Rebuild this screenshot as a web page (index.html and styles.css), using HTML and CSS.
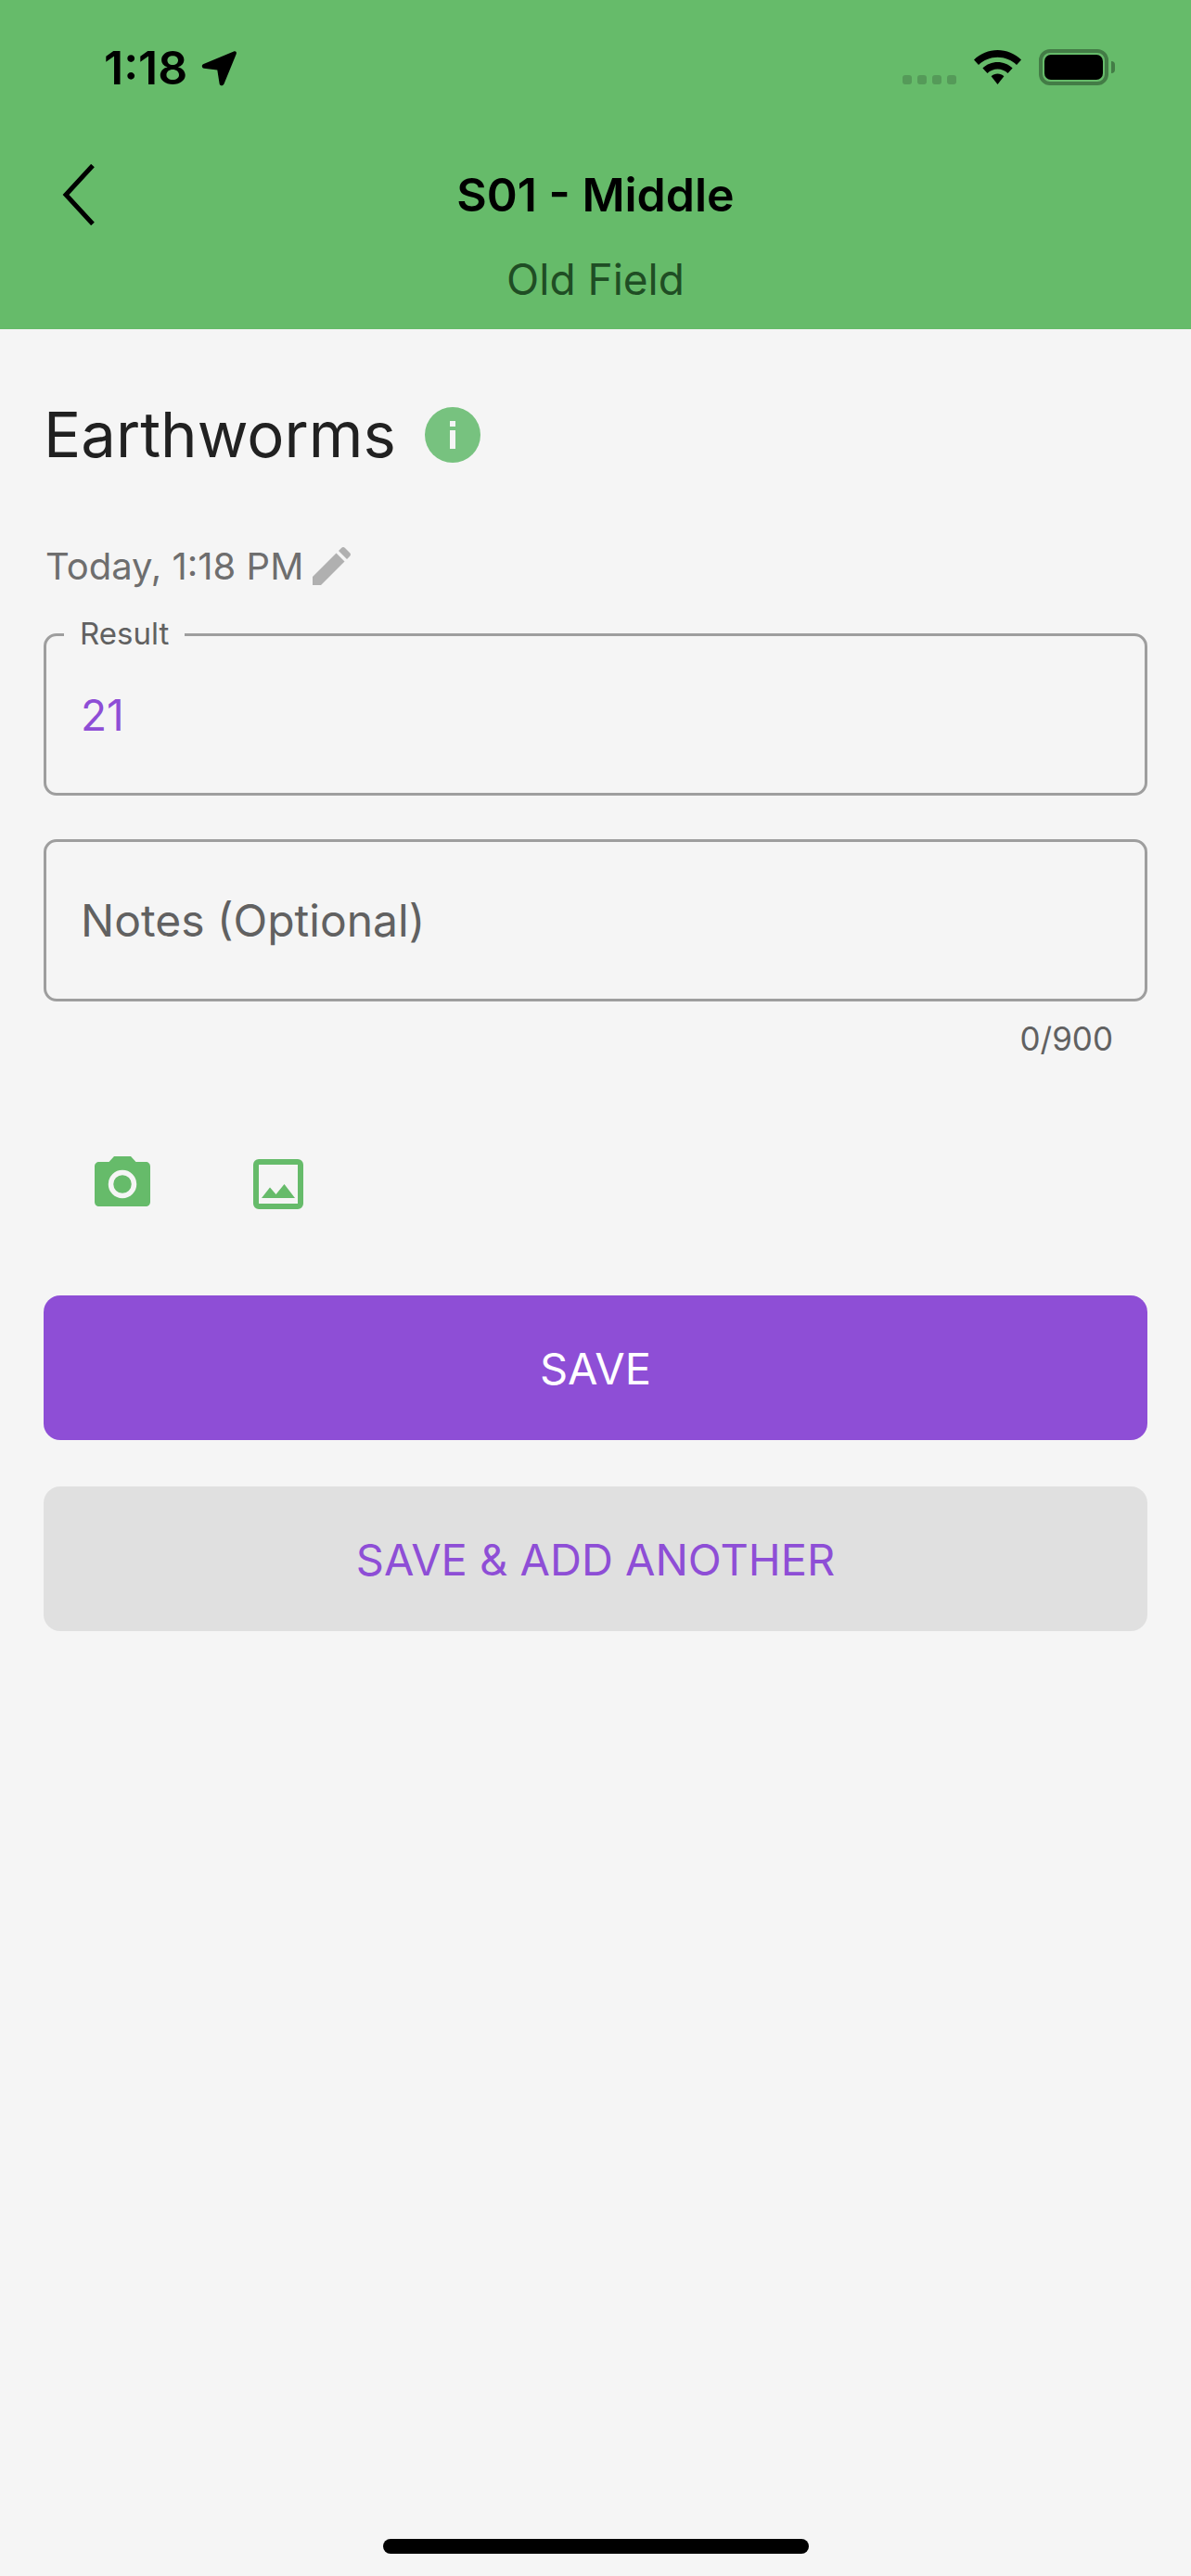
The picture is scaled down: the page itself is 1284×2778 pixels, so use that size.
FILE: index.html
```html
<!DOCTYPE html>
<html>
<head>
    <title>Earthworms</title>
    <link rel="stylesheet" href="styles.css">
</head>
<body>
    <header class="top-bar">
        <div class="status-bar">
            <div class="status-left">
                <span class="clock">1:18</span>
                <svg class="location-icon" width="39" height="39" viewBox="0 0 39 39">
                    <path d="M35 1.5 C37 0.7 38.5 2.2 37.7 4.2 L24.5 36.5 C23.5 39 20 38.8 19.6 36.2 L17.3 21.6 L3 19.7 C0.4 19.3 0 16 2.5 15 Z" fill="#000"/>
                </svg>
            </div>
            <div class="status-right">
                <div class="signal-dots">
                    <span></span><span></span><span></span><span></span>
                </div>
                <svg class="wifi-icon" width="51" height="37" viewBox="0 0 51 37">
                    <path d="M25.5 0 C35 0 44 3.800 51 10.500 L46 16 C40.500 10.800 33.300 7.800 25.500 7.800 C17.700 7.800 10.500 10.800 5 16 L0 10.500 C7 3.800 16 0 25.500 0 Z" fill="#000"/>
                    <path d="M25.500 13 C31.500 13 37.200 15.300 41.600 19.500 L36.500 25 C33.500 22.200 29.600 20.600 25.500 20.600 C21.400 20.600 17.500 22.200 14.500 25 L9.400 19.500 C13.800 15.300 19.500 13 25.500 13 Z" fill="#000"/>
                    <path d="M25.500 25.500 C28 25.500 30.500 26.500 32.400 28.200 L25.500 37 L18.600 28.200 C20.500 26.500 23 25.500 25.500 25.500 Z" fill="#000"/>
                </svg>
                <div class="battery">
                    <div class="battery-body"><div class="battery-level"></div></div>
                    <div class="battery-cap"></div>
                </div>
            </div>
        </div>
        <div class="nav-row">
            <svg class="back-icon" width="36" height="66" viewBox="0 0 36 66">
                <path d="M33 1.500 L4 33 L33 64.500" fill="none" stroke="#000" stroke-width="5"/>
            </svg>
            <h1 class="nav-title">S01 - Middle</h1>
        </div>
        <div class="nav-subtitle">Old Field</div>
    </header>

    <main class="content">
        <div class="title-row">
            <h2 class="page-title">Earthworms</h2>
            <span class="info-badge">
                <svg width="60" height="60" viewBox="0 0 60 60">
                    <circle cx="30" cy="30" r="30" fill="#77c27f"/>
                    <rect x="27" y="15" width="6" height="6" fill="#f5f5f5"/>
                    <rect x="27" y="25" width="6" height="20" fill="#f5f5f5"/>
                </svg>
            </span>
        </div>

        <div class="date-row">
            <span class="date-text">Today, 1:18 PM</span>
            <svg class="edit-icon" width="41" height="41" viewBox="0 0 41 41">
                <path d="M0 32 L25.500 6.500 L34.500 15.500 L9 41 L0 41 Z" fill="#b0b0b0"/>
                <path d="M28 4 L31 1 C32.300 -0.300 33.700 -0.300 35 1 L40 6 C41.300 7.300 41.300 8.700 40 10 L37 13 Z" fill="#b0b0b0"/>
            </svg>
        </div>

        <div class="field">
            <span class="field-label">Result</span>
            <span class="field-value">21</span>
        </div>

        <div class="field field-notes">
            <span class="field-placeholder">Notes (Optional)</span>
        </div>
        <div class="char-count">0/900</div>

        <div class="media-row">
            <svg class="camera-icon" width="60" height="54" viewBox="0 0 60 54">
                <path d="M21 0 L39 0 L44.500 6 L55 6 C58 6 60 8 60 11 L60 49 C60 52 58 54 55 54 L5 54 C2 54 0 52 0 49 L0 11 C0 8 2 6 5 6 L15.500 6 Z" fill="#66bb6a"/>
                <circle cx="30" cy="30" r="12.500" fill="none" stroke="#f5f5f5" stroke-width="5.500"/>
            </svg>
            <svg class="image-icon" width="54" height="54" viewBox="0 0 54 54">
                <rect x="3" y="3" width="48" height="48" rx="3" fill="none" stroke="#66bb6a" stroke-width="6"/>
                <path d="M9 42 L18 30.500 L24.500 38 L33.500 27 L45 42 Z" fill="#66bb6a"/>
            </svg>
        </div>

        <button class="btn btn-primary">SAVE</button>
        <button class="btn btn-secondary">SAVE &amp; ADD ANOTHER</button>
    </main>

    <div class="home-indicator"></div>
</body>
</html>
```

FILE: styles.css
```css
* {
    box-sizing: border-box;
}

body {
    margin: 0;
    min-height: 2778px;
    display: flex;
    flex-direction: column;
    font-family: Inter, "Liberation Sans", sans-serif;
    background-color: #f5f5f5;
}

/* green header */
.top-bar {
    height: 355px;
    background-color: #66bb6a;
    padding-top: 53px;
}

.status-bar {
    height: 40px;
    display: flex;
    justify-content: space-between;
    padding: 0 82px 0 112px;
}

.status-left {
    display: flex;
    align-items: center;
    gap: 15px;
}

.clock {
    font-size: 50px;
    line-height: 40px;
    font-weight: 600;
    color: #000;
}

.status-right {
    display: flex;
    align-items: flex-start;
}

.signal-dots {
    display: flex;
    gap: 6px;
    margin-top: 28px;
    margin-right: 19px;
}

.signal-dots span {
    width: 10px;
    height: 10px;
    border-radius: 3px;
    background-color: #559a59;
}

.wifi-icon {
    margin-top: 1px;
    margin-right: 19px;
}

.battery {
    display: flex;
    align-items: center;
    gap: 3px;
}

.battery-body {
    width: 75px;
    height: 39px;
    padding: 2px;
    border: 4px solid #437c46;
    border-radius: 12px;
}

.battery-level {
    height: 100%;
    background-color: #000;
    border-radius: 7px;
}

.battery-cap {
    width: 4px;
    height: 13px;
    background-color: #437c46;
    border-radius: 0 4px 4px 0;
}

.nav-row {
    position: relative;
    margin-top: 84px;
    height: 66px;
    display: flex;
    align-items: center;
    justify-content: center;
}

.back-icon {
    position: absolute;
    left: 67px;
    top: 0;
}

.nav-title {
    margin: 0;
    font-size: 50px;
    line-height: 60px;
    font-weight: 600;
    color: #000;
}

.nav-subtitle {
    margin-top: 30px;
    text-align: center;
    font-size: 46px;
    line-height: 56px;
    color: #1f4d24;
}

/* form */
.content {
    padding: 0 47px;
}

.title-row {
    display: flex;
    align-items: center;
    gap: 31px;
    height: 60px;
    margin-top: 84px;
}

.page-title {
    margin: 0;
    font-size: 67px;
    line-height: 60px;
    font-weight: 400;
    color: #212121;
}

.info-badge {
    display: flex;
}

.date-row {
    display: flex;
    align-items: center;
    gap: 10px;
    height: 41px;
    margin-top: 91px;
}

.date-text {
    padding-left: 2px;
    font-size: 40px;
    line-height: 41px;
    color: #6e6e6e;
}

.field {
    position: relative;
    display: flex;
    align-items: center;
    height: 175px;
    margin-top: 52px;
    padding: 0 37px;
    border: 3px solid #9e9e9e;
    border-radius: 14px;
}

.field-notes {
    margin-top: 47px;
}

.field-label {
    position: absolute;
    left: 19px;
    top: -23px;
    padding: 0 17px;
    font-size: 33px;
    line-height: 40px;
    color: #616161;
    background-color: #f5f5f5;
}

.field-value {
    font-size: 46px;
    color: #8e4ed6;
}

.field-placeholder {
    font-size: 48px;
    color: #616161;
}

.char-count {
    margin-top: 18px;
    padding-right: 37px;
    text-align: right;
    font-size: 35px;
    line-height: 44px;
    color: #616161;
}

.media-row {
    display: flex;
    align-items: flex-start;
    height: 57px;
    margin-top: 105px;
    padding-left: 55px;
    gap: 111px;
}

.image-icon {
    margin-top: 3px;
}

.btn {
    display: block;
    width: 100%;
    height: 156px;
    border: none;
    border-radius: 18px;
    font-family: inherit;
    font-size: 47px;
    cursor: pointer;
}

.btn-primary {
    margin-top: 93px;
    background-color: #8e4ed6;
    color: #fff;
}

.btn-secondary {
    margin-top: 50px;
    background-color: #e0e0e0;
    color: #8e4ed6;
}

.home-indicator {
    width: 459px;
    height: 16px;
    margin: auto auto 24px;
    background-color: #000;
    border-radius: 8px;
}
```
